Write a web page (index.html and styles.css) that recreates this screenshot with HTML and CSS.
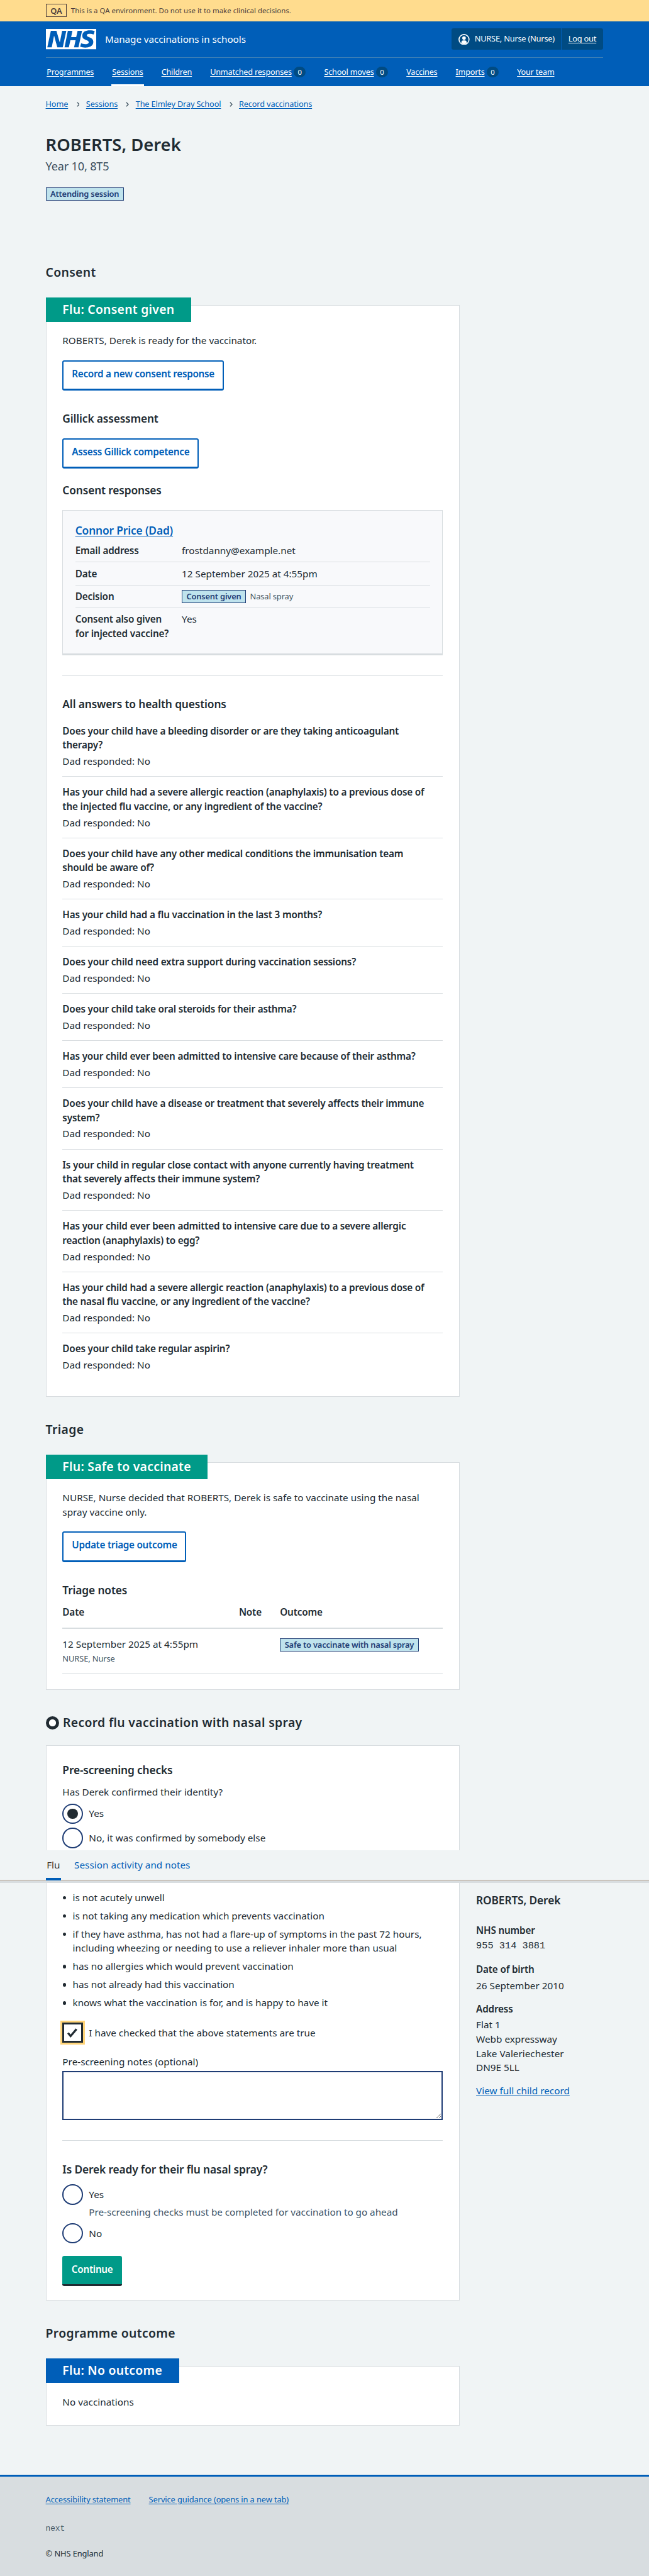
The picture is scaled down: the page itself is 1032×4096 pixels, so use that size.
FILE: index.html
```html
<!DOCTYPE html>
<html lang="en">
<head>
<meta charset="utf-8">
<title>ROBERTS, Derek – Manage vaccinations in schools</title>
<link rel="stylesheet" href="styles.css">
</head>
<body>
<div class="env">
  <div class="wrap env-row"><strong class="env-tag">QA</strong><span>This is a QA environment. Do not use it to make clinical decisions.</span></div>
</div>
<header class="header">
  <div class="wrap">
    <div class="header-row">
      <svg class="logo" viewBox="0 0 40 16" aria-label="NHS"><path fill="#fff" d="M0 0h40v16H0z"/><path fill="#005eb8" d="M3.9 1.5h4.4l2.6 9h.1l1.8-9h3.3l-2.8 13H9L6.5 5.500h-.1l-1.8 9H1.1M17.300 1.500h3.600l-1 4.900h4L25 1.500h3.500l-2.800 13h-3.500l1.200-5.600h-4.100l-1.200 5.600h-3.400M37.700 4.400c-.7-.3-1.600-.6-2.900-.6-1.400 0-2.500.2-2.500 1.300 0 1.800 5.100 1.200 5.100 5.100 0 3.600-3.300 4.500-6.400 4.500-1.300 0-2.900-.3-4-.7l.8-2.700c.7.4 2.100.7 3.200.7s2.800-.2 2.800-1.500c0-2.100-5.100-1.300-5.100-5 0-3.400 2.900-4.400 5.800-4.400 1.600 0 3.100.2 4 .6"/></svg>
      <span class="service">Manage vaccinations in schools</span>
      <div class="account">
        <span class="account-user"><svg class="user" viewBox="0 0 22 22"><circle cx="11" cy="11" r="9.900" fill="none" stroke="#fff" stroke-width="2"/><circle cx="11" cy="8.200" r="3.500" fill="#fff"/><path fill="#fff" d="M5.800 18v-1.500c0-2.200 1.600-3.700 3.700-3.700h3c2.100 0 3.700 1.500 3.700 3.700V18c-1.400 1.300-3.200 2-5.200 2s-3.800-.7-5.200-2z"/></svg>NURSE, Nurse (Nurse)</span>
        <a class="account-out" href="#">Log out</a>
      </div>
    </div>
    <nav class="nav">
      <a href="#">Programmes</a><a href="#" class="current">Sessions</a><a href="#">Children</a><span><a href="#">Unmatched responses</a><b>0</b></span><span><a href="#">School moves</a><b>0</b></span><a href="#">Vaccines</a><span><a href="#">Imports</a><b>0</b></span><a href="#">Your team</a>
    </nav>
  </div>
</header>
<div class="wrap">
  <nav class="crumbs">
    <a href="#">Home</a><svg viewBox="0 0 6 10"><path d="M1 1l4 4-4 4"/></svg><a href="#">Sessions</a><svg viewBox="0 0 6 10"><path d="M1 1l4 4-4 4"/></svg><a href="#">The Elmley Dray School</a><svg viewBox="0 0 6 10"><path d="M1 1l4 4-4 4"/></svg><a href="#">Record vaccinations</a>
  </nav>
  <h1>ROBERTS, Derek</h1>
  <p class="caption">Year 10, 8T5</p>
  <div class="status"><strong class="tag">Attending session</strong></div>

  <h2 class="first">Consent</h2>
  <section class="card">
    <h3 class="tab green">Flu: Consent given</h3>
    <p>ROBERTS, Derek is ready for the vaccinator.</p>
    <a class="button" href="#">Record a new consent response</a>
    <h4>Gillick assessment</h4>
    <a class="button" href="#">Assess Gillick competence</a>
    <h4 class="near">Consent responses</h4>
    <div class="response">
      <h4><a href="#">Connor Price (Dad)</a></h4>
      <dl>
        <div><dt>Email address</dt><dd>frostdanny@example.net</dd></div>
        <div><dt>Date</dt><dd>12 September 2025 at 4:55pm</dd></div>
        <div><dt>Decision</dt><dd class="decision"><strong class="tag">Consent given</strong><span class="small">Nasal spray</span></dd></div>
        <div><dt>Consent also given<br>for injected vaccine?</dt><dd>Yes</dd></div>
      </dl>
    </div>
    <hr>
    <h4>All answers to health questions</h4>
    <dl class="answers">
      <div><dt>Does your child have a bleeding disorder or are they taking anticoagulant<br>therapy?</dt><dd>Dad responded: No</dd></div>
      <div><dt>Has your child had a severe allergic reaction (anaphylaxis) to a previous dose of<br>the injected flu vaccine, or any ingredient of the vaccine?</dt><dd>Dad responded: No</dd></div>
      <div><dt>Does your child have any other medical conditions the immunisation team<br>should be aware of?</dt><dd>Dad responded: No</dd></div>
      <div><dt>Has your child had a flu vaccination in the last 3 months?</dt><dd>Dad responded: No</dd></div>
      <div><dt>Does your child need extra support during vaccination sessions?</dt><dd>Dad responded: No</dd></div>
      <div><dt>Does your child take oral steroids for their asthma?</dt><dd>Dad responded: No</dd></div>
      <div><dt>Has your child ever been admitted to intensive care because of their asthma?</dt><dd>Dad responded: No</dd></div>
      <div><dt>Does your child have a disease or treatment that severely affects their immune<br>system?</dt><dd>Dad responded: No</dd></div>
      <div><dt>Is your child in regular close contact with anyone currently having treatment<br>that severely affects their immune system?</dt><dd>Dad responded: No</dd></div>
      <div><dt>Has your child ever been admitted to intensive care due to a severe allergic<br>reaction (anaphylaxis) to egg?</dt><dd>Dad responded: No</dd></div>
      <div><dt>Has your child had a severe allergic reaction (anaphylaxis) to a previous dose of<br>the nasal flu vaccine, or any ingredient of the vaccine?</dt><dd>Dad responded: No</dd></div>
      <div><dt>Does your child take regular aspirin?</dt><dd>Dad responded: No</dd></div>
    </dl>
  </section>

  <h2>Triage</h2>
  <section class="card">
    <h3 class="tab green">Flu: Safe to vaccinate</h3>
    <p>NURSE, Nurse decided that ROBERTS, Derek is safe to vaccinate using the nasal<br>spray vaccine only.</p>
    <a class="button" href="#">Update triage outcome</a>
    <h4>Triage notes</h4>
    <table>
      <thead><tr><th class="c-date">Date</th><th class="c-note">Note</th><th>Outcome</th></tr></thead>
      <tbody><tr><td>12 September 2025 at 4:55pm<span class="small block">NURSE, Nurse</span></td><td></td><td><strong class="tag">Safe to vaccinate with nasal spray</strong></td></tr></tbody>
    </table>
  </section>

  <h2 class="with-icon"><svg class="ring" viewBox="0 0 26 26"><circle cx="13" cy="13" r="10" fill="#fff" stroke="#212b32" stroke-width="6"/></svg>Record flu vaccination with nasal spray</h2>
  <section class="card checks-top">
    <h4>Pre-screening checks</h4>
    <p class="question">Has Derek confirmed their identity?</p>
    <label class="choice"><span class="radio on"></span>Yes</label>
    <label class="choice"><span class="radio"></span>No, it was confirmed by somebody else</label>
  </section>
</div>
<nav class="subnav">
  <div class="wrap"><a class="current" href="#">Flu</a><a href="#">Session activity and notes</a></div>
</nav>
<div class="wrap split">
  <section class="card checks-bottom">
    <ul>
      <li>is not acutely unwell</li>
      <li>is not taking any medication which prevents vaccination</li>
      <li>if they have asthma, has not had a flare-up of symptoms in the past 72 hours,<br>including wheezing or needing to use a reliever inhaler more than usual</li>
      <li>has no allergies which would prevent vaccination</li>
      <li>has not already had this vaccination</li>
      <li>knows what the vaccination is for, and is happy to have it</li>
    </ul>
    <label class="choice"><span class="checkbox"><svg viewBox="0 0 32 32"><path d="M7.500 16.500l5 6L24 9" fill="none" stroke="#212b32" stroke-width="4"/></svg></span>I have checked that the above statements are true</label>
    <p class="notes-label">Pre-screening notes (optional)</p>
    <textarea></textarea>
    <hr>
    <h4>Is Derek ready for their flu nasal spray?</h4>
    <label class="choice"><span class="radio"></span>Yes</label>
    <p class="hint">Pre-screening checks must be completed for vaccination to go ahead</p>
    <label class="choice"><span class="radio"></span>No</label>
    <a class="button primary" href="#">Continue</a>
  </section>
  <aside>
    <h4>ROBERTS, Derek</h4>
    <dl>
      <dt>NHS number</dt><dd class="number">955 314 3881</dd>
      <dt>Date of birth</dt><dd>26 September 2010</dd>
      <dt>Address</dt><dd>Flat 1<br>Webb expressway<br>Lake Valeriechester<br>DN9E 5LL</dd>
    </dl>
    <a href="#">View full child record</a>
  </aside>
</div>
<div class="wrap">
  <h2>Programme outcome</h2>
  <section class="card outcome">
    <h3 class="tab blue">Flu: No outcome</h3>
    <p>No vaccinations</p>
  </section>
</div>
<footer>
  <div class="wrap">
    <div class="footer-links"><a href="#">Accessibility statement</a><a href="#">Service guidance (opens in a new tab)</a></div>
    <p class="version">next</p>
    <p class="copyright">© NHS England</p>
  </div>
</footer>
</body>
</html>
```
FILE: styles.css
```css
/* 1rem is ten design pixels */
html { font-size: 8.0625px; }
*, *::before, *::after { box-sizing: border-box; }
body { margin: 0; min-height: 4096px; display: flex; flex-direction: column; background: #f0f4f5; color: #212b32; font-family: "Noto Sans", "Open Sans", sans-serif; font-size: 1.9rem; line-height: 2.8rem; }
h1, h2, h3, h4, p, dl, dd, ul { margin: 0; padding: 0; }
h1, h2, h3, h4, dt, th, strong { font-weight: 600; }
dt, th { letter-spacing: -0.012em; }
a { color: #005eb8; text-underline-offset: 0.12em; }
.wrap { width: 110rem; margin: 0 auto; }

.env { background: #ffdc8e; height: 4.2rem; color: #4a3c3c; font-size: 1.42rem; }
.env-row { display: flex; align-items: center; height: 100%; gap: 0.8rem; }
.env-tag { display: flex; align-items: center; justify-content: center; width: 4.2rem; height: 2.6rem; border: 1px solid #4a3c3c; font-size: 1.6rem; }

.header { background: #005eb8; height: 12.8rem; color: #fff; }
.header a { color: #fff; }
.header-row { display: flex; align-items: center; height: 7.2rem; border-bottom: 1px solid #3f7fb5; }
.logo { width: 10rem; height: 4rem; margin-right: 1.7rem; }
.service { flex: 1; font-size: 1.9rem; letter-spacing: -0.005em; }
.account { display: flex; height: 4.2rem; border-radius: 0.4rem; background: #004b83; font-size: 1.6rem; line-height: 4.2rem; letter-spacing: -0.02em; }
.account-user { display: flex; align-items: center; width: 21.7rem; padding-left: 1.4rem; border-right: 1px solid #005eb8; white-space: nowrap; }
.user { width: 2.2rem; height: 2.2rem; margin-right: 1rem; }
.account-out { width: 8.3rem; text-align: center; }
.nav { display: flex; gap: 3.2rem; height: 5.6rem; font-size: 1.57rem; line-height: 2.4rem; letter-spacing: -0.015em; white-space: nowrap; }
.nav > * { padding: 0 0.2rem; display: flex; align-items: center; flex: none; }
.nav .current { border-bottom: 0.4rem solid #fff; padding-top: 0.4rem; }
.nav b { display: inline-block; width: 2.4rem; height: 2.2rem; margin-left: 0.4rem; border-radius: 1.2rem; background: #004b83; font-size: 1.4rem; font-weight: 400; line-height: 2.2rem; text-align: center; }

.crumbs { display: flex; align-items: center; padding-top: 2.4rem; font-size: 1.58rem; line-height: 2.4rem; letter-spacing: -0.01em; }
.crumbs svg { width: 0.6rem; height: 1rem; margin: 0 1.3rem 0 1.65rem; fill: none; stroke: #425563; stroke-width: 1.7; }
h1 { margin-top: 4.55rem; font-size: 3.4rem; line-height: 4.4rem; }
.caption { margin-top: 0.55rem; color: #3c4f5e; font-size: 2.25rem; line-height: 3.2rem; letter-spacing: -0.01em; }
.status { display: flex; margin-top: 2.5rem; }
.tag { display: inline-block; height: 2.6rem; padding: 0 0.8rem; border: 1px solid #1f3d75; background: #bfe3ed; color: #1f3d75; font-size: 1.6rem; line-height: 2.4rem; letter-spacing: -0.015em; white-space: nowrap; }

h2 { margin: 4.83rem 0; font-size: 2.4rem; line-height: 3.2rem; letter-spacing: 0.018em; }
h2.first { margin-top: 12.5rem; }
h4 { font-size: 2.15rem; line-height: 3rem; margin-top: 3.95rem; letter-spacing: -0.008em; }
h4.near { margin-top: 2.75rem; }
.card { width: 81.7rem; border: 1px solid #d8dde0; background: #fff; padding: 0 3.2rem 3.2rem; }
.tab { width: max-content; height: 4.8rem; margin: -1.6rem 0 2.35rem -3.3rem; padding: 0 3.3rem; color: #fff; font-size: 2.4rem; line-height: 4.6rem; letter-spacing: 0.014em; white-space: nowrap; }
.green { background: #009a88; }
.blue { background: #005eb8; }
.button { display: block; width: max-content; height: 6rem; margin-top: 2.45rem; padding: 0 1.6rem; border: 2px solid #005eb8; border-bottom-width: 0.4rem; border-radius: 0.4rem; color: #005eb8; font-weight: 600; line-height: 4.9rem; letter-spacing: -0.019em; text-decoration: none; white-space: nowrap; }
.response { margin-top: 2.4rem; height: 28.6rem; padding: 2.4rem 2.4rem 0; border: 1px solid #d8dde0; border-bottom-width: 0.4rem; background: #f8f9fb; }
.response h4 { margin: 0 0 0.3rem; }
.response dl > div { display: flex; min-height: 4.5rem; padding: 0.8rem 0 0; border-bottom: 1px solid #d8dde0; }
.response dl > div:last-child { border: 0; }
.response dt { width: 21rem; padding-right: 2rem; white-space: nowrap; }
.decision { display: flex; align-items: center; height: 2.8rem; gap: 0.8rem; }
.small { color: #425563; font-size: 1.6rem; line-height: 2.4rem; letter-spacing: -0.01em; }
.block { display: block; margin-top: 0.3rem; }
hr { height: 1px; margin: 4rem 0 0; border: 0; background: #d8dde0; }
hr + h4 { margin-top: 4.03rem; }
.answers { margin-top: 0.78rem; }
.answers > div { padding: 1.6rem 0 1.575rem; border-bottom: 1px solid #d8dde0; white-space: nowrap; }
.answers > div:last-child { border: 0; }
.answers dt { margin-bottom: 0.4rem; }

table { width: 100%; border-collapse: collapse; text-align: left; table-layout: fixed; }
th { padding: 1.5rem 0 1.65rem; border-bottom: 2px solid #d8dde0; }
td { height: 8.85rem; padding: 1.6rem 0 0; border-bottom: 1px solid #d8dde0; vertical-align: top; }
.c-date { width: 34.8rem; }
.c-note { width: 8.1rem; }

h2.with-icon { display: flex; align-items: center; gap: 0.8rem; margin-bottom: 2.8rem; }
.ring { width: 2.6rem; height: 2.6rem; }
.checks-top { height: 20.7rem; border-bottom: 0; padding-bottom: 0; }
.checks-top h4 { margin-top: 3.25rem; }
.question { margin: 1.45rem 0 0.9rem; }
.choice { display: flex; align-items: center; height: 4rem; gap: 1.2rem; }
.choice + .choice { margin-top: 0.8rem; }
.radio { display: flex; align-items: center; justify-content: center; width: 4rem; height: 4rem; border: 2px solid #1f3d75; border-radius: 50%; background: #fff; }
.radio.on::after { content: ""; width: 2rem; height: 2rem; border-radius: 50%; background: #212b32; }

.subnav { height: 6.5rem; border-bottom: 0.5rem solid #d8dde0; box-shadow: inset 0 -1px #b59c86; }
.subnav .wrap { display: flex; gap: 2.4rem; height: 5.95rem; }
.subnav a { padding: 1.5rem 0.2rem 0; text-decoration: none; }
.subnav .current { border-bottom: 0.5rem solid #005eb8; color: #3c3432; }

.split { display: flex; gap: 3.2rem; }
.checks-bottom { border-top: 0; padding: 1.45rem 3.2rem 2.8rem; }
ul { list-style: none; display: flex; flex-direction: column; gap: 0.8rem; margin-bottom: 2.5rem; white-space: nowrap; }
li { display: flex; padding-left: 2rem; }
li::before { content: ""; flex: none; width: 0.7rem; height: 0.7rem; margin: 1.1rem 1.25rem 0 -1.95rem; border-radius: 50%; background: #212b32; }
.checkbox { width: 4rem; height: 4rem; border: 0.4rem solid #212b32; outline: 0.4rem solid #ffd478; background: #fff; display: flex; }
.checkbox svg { width: 100%; height: 100%; }
.notes-label { margin: 2.3rem 0 0.5rem; }
textarea { display: block; width: 100%; height: 9.6rem; border: 2px solid #1f3d75; background: #fff; }
.checks-bottom h4 { margin-bottom: 1.55rem; }
.hint { padding-left: 5.2rem; margin-bottom: 0.85rem; color: #3c5468; letter-spacing: -0.003em; }
.button.primary { margin-top: 2.4rem; border: 0; border-bottom: 0.4rem solid #212b32; padding: 0 1.8rem; background: #009a88; color: #fff; line-height: 5.3rem; }

aside { padding-top: 1.9rem; }
aside h4 { margin: 0 0 3rem; }
aside dt { margin-bottom: 0.4rem; }
aside dd { margin-bottom: 1.75rem; white-space: nowrap; }
.number { font-family: "Liberation Mono", monospace; }
.outcome { padding-bottom: 3.2rem; }

footer { flex: 1; margin-top: 9.65rem; border-top: 0.4rem solid #005eb8; background: #d8dde0; font-size: 1.6rem; line-height: 2.4rem; letter-spacing: -0.01em; }
.footer-links { display: flex; gap: 3.6rem; margin-top: 3.35rem; }
.version { margin-top: 3.25rem; color: #425563; font-family: "Liberation Mono", monospace; }
.copyright { margin-top: 2.6rem; }
```
